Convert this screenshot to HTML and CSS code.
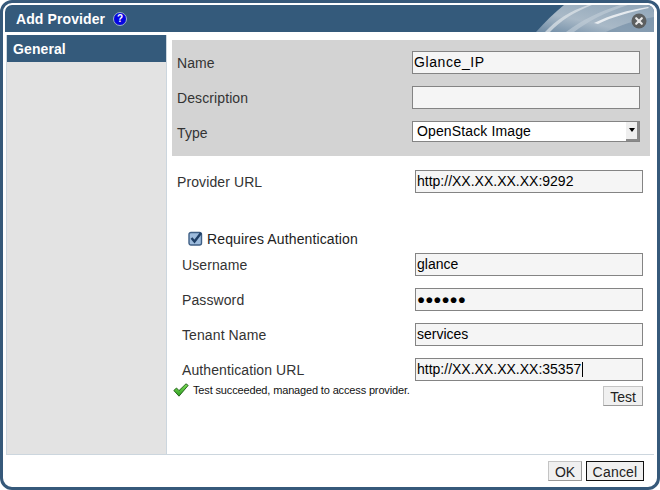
FILE: index.html
```html
<!DOCTYPE html>
<html lang="en">
<head>
    <meta charset="UTF-8">
    <title>Add Provider</title>
    <link rel="stylesheet" href="styles.css">
</head>
<body>
    <div class="dialog">
        <header class="dialog-head">
            <span class="dialog-title">Add Provider</span>
            <span class="help-icon">?</span>
            <svg class="head-art" width="118" height="27" viewBox="0 0 118 27">
                <defs>
                    <linearGradient id="sheen" x1="0" y1="1" x2="1" y2="0">
                        <stop offset="0" stop-color="#6d8aa4"/>
                        <stop offset="0.4" stop-color="#a9b9c7"/>
                        <stop offset="1" stop-color="#8fa5b8"/>
                    </linearGradient>
                </defs>
                <path d="M0 27 C9 17 18 8 28 0 H118 V27 Z" fill="url(#sheen)"/>
                <path d="M9 27 C20 15 34 6 52 0 H56 C38 7 24 16 14 27 Z" fill="#dfe5ea" opacity="0.7"/>
                <path d="M30 27 C46 15 62 7 84 0 H92 C70 7 52 16 38 27 Z" fill="#c3cfd9" opacity="0.6"/>
                <path d="M58 18 C74 10 92 5 112 2 L113 3 C94 7 76 12 62 19 Z" fill="#f2f5f7" opacity="0.85"/>
                <path d="M70 27 C84 20 100 15 118 12 V27 Z" fill="#6f8ba4" opacity="0.6"/>
            </svg>
            <svg class="close-icon" width="16" height="16" viewBox="0 0 16 16">
                <circle cx="8" cy="8" r="7.5" fill="#5c5f60"/>
                <path d="M5.2 5.2 L10.8 10.8 M10.8 5.2 L5.2 10.8" stroke="#e8e8e8" stroke-width="2.2" stroke-linecap="round"/>
            </svg>
        </header>

        <div class="dialog-body">
            <aside class="side-nav">
                <div class="side-tab">General</div>
            </aside>

            <main class="content">
                <section class="panel">
                    <div class="row">
                        <label>Name</label>
                        <div class="field">Glance_IP</div>
                    </div>
                    <div class="row">
                        <label>Description</label>
                        <div class="field"></div>
                    </div>
                    <div class="row">
                        <label>Type</label>
                        <div class="select">
                            <span>OpenStack Image</span>
                            <span class="select-btn"><i></i></span>
                        </div>
                    </div>
                </section>

                <div class="row url-row">
                    <label>Provider URL</label>
                    <div class="field">http://XX.XX.XX.XX:9292</div>
                </div>

                <div class="check-row">
                    <svg class="check-box" width="15" height="15" viewBox="0 0 15 15">
                        <rect x="1" y="1.5" width="12.5" height="12.5" rx="2" fill="#9dbbdc" stroke="#3f5f85" stroke-width="1.4"/>
                        <path d="M3.5 7 L6.5 10.5 L13 2" fill="none" stroke="#1f3f66" stroke-width="2.4"/>
                    </svg>
                    <span>Requires Authentication</span>
                </div>

                <div class="auth">
                    <div class="row">
                        <label>Username</label>
                        <div class="field">glance</div>
                    </div>
                    <div class="row">
                        <label>Password</label>
                        <div class="field dots">&#9679;&#9679;&#9679;&#9679;&#9679;&#9679;</div>
                    </div>
                    <div class="row">
                        <label>Tenant Name</label>
                        <div class="field">services</div>
                    </div>
                    <div class="row">
                        <label>Authentication URL</label>
                        <div class="field">http://XX.XX.XX.XX:35357<span class="caret"></span></div>
                    </div>
                </div>

                <div class="test-row">
                    <div class="test-msg">
                        <svg width="16" height="14" viewBox="0 0 16 14">
                            <defs>
                                <linearGradient id="tick" x1="0" y1="0" x2="0" y2="1">
                                    <stop offset="0" stop-color="#7fe05a"/>
                                    <stop offset="1" stop-color="#2f9e22"/>
                                </linearGradient>
                            </defs>
                            <path d="M0.8 7.5 L3.5 5 L6 7.6 L13 0.8 L15.2 2.4 L6 13.2 Z" fill="url(#tick)" stroke="#1d5a14" stroke-width="0.9"/>
                        </svg>
                        <span>Test succeeded, managed to access provider.</span>
                    </div>
                    <button class="btn btn-test">Test</button>
                </div>
            </main>
        </div>

        <footer class="dialog-foot">
            <button class="btn btn-ok">OK</button>
            <button class="btn btn-default">Cancel</button>
        </footer>
    </div>
</body>
</html>
```

FILE: styles.css
```css
* {
    margin: 0;
    padding: 0;
    box-sizing: border-box;
}
html, body {
    height: 100%;
}
body {
    font-family: "Liberation Sans", Arial, sans-serif;
    font-size: 14px;
    color: #333;
    background: #fff;
    overflow: hidden;
}
label {
    letter-spacing: 0.1px;
}
.dialog {
    height: 490px;
    display: flex;
    flex-direction: column;
    border: 3px solid #36597a;
    border-radius: 12px;
    padding: 2px 3px 0 2px;
    background: #fff;
}
.dialog-head {
    position: relative;
    height: 27px;
    flex: none;
    display: flex;
    align-items: center;
    gap: 8px;
    padding-left: 11px;
    background: #345a7b;
    border-radius: 7px 7px 0 0;
    overflow: hidden;
}
.dialog-title {
    color: #fff;
    font-weight: bold;
    letter-spacing: 0.1px;
}
.help-icon {
    width: 14px;
    height: 14px;
    border-radius: 50%;
    background: #0505e0;
    border: 1px solid #9db2c8;
    color: #fff;
    font-size: 10px;
    font-weight: bold;
    line-height: 12px;
    text-align: center;
}
.head-art {
    position: absolute;
    right: 0;
    top: 0;
}
.close-icon {
    position: absolute;
    right: 7px;
    top: 8px;
}
.dialog-body {
    flex: 1;
    display: flex;
    margin: 3px 0 0 1px;
    border: 1px solid #ccd6de;
    border-top: none;
    border-right: none;
    min-height: 0;
}
.side-nav {
    width: 160px;
    flex: none;
    background: #e3e3e3;
    border-right: 1px solid #ccd6de;
}
.side-tab {
    height: 27px;
    padding-left: 6px;
    line-height: 29px;
    background: #345a7b;
    color: #fff;
    font-weight: bold;
    letter-spacing: 0.1px;
}
.content {
    flex: 1;
    padding: 5px 0 0 5px;
}
.panel {
    width: 478px;
    height: 116px;
    padding-top: 11px;
    background: #d3d3d3;
}
.row {
    display: flex;
    align-items: center;
    justify-content: space-between;
    height: 23px;
    margin-bottom: 12px;
    padding-left: 5px;
}
.panel .row {
    padding-right: 10px;
}
.field {
    width: 228px;
    height: 23px;
    line-height: 21px;
    padding-left: 1px;
    border: 1px solid #848484;
    background: #f5f5f5;
    color: #000;
}
.panel .field {
    letter-spacing: 0.6px;
}
.dots {
    font-size: 13.5px;
}
.select {
    width: 228px;
    height: 21px;
    align-self: flex-start;
    display: flex;
    align-items: center;
    justify-content: space-between;
    padding: 0 0 1px 4px;
    border: 1px solid #848484;
    background: #fff;
    color: #000;
    letter-spacing: 0.13px;
}
.select-btn {
    width: 13px;
    height: 19px;
    display: flex;
    align-items: center;
    justify-content: center;
    background: #efefef;
    border-right: 2px solid #8a8a8a;
    border-bottom: 2px solid #8a8a8a;
}
.select-btn i {
    border: 3px solid transparent;
    border-top: 4px solid #000;
    border-bottom: none;
}
.url-row {
    margin-top: 14px;
    padding-right: 11px;
}
.check-row {
    display: flex;
    align-items: center;
    gap: 4px;
    margin: 37px 0 0 16px;
    height: 17px;
    color: #222;
    letter-spacing: 0.13px;
}
.auth {
    margin-top: 6px;
    padding-left: 5px;
    padding-right: 11px;
}
.test-row {
    display: flex;
    justify-content: space-between;
    align-items: flex-start;
    margin-top: -10px;
    padding-left: 1px;
    padding-right: 11px;
}
.test-msg {
    display: flex;
    align-items: center;
    gap: 4px;
    font-size: 11px;
    color: #111;
    letter-spacing: -0.15px;
}
.test-row .btn {
    margin-top: 3px;
}
.caret {
    display: inline-block;
    width: 1px;
    height: 15px;
    margin-left: 1px;
    vertical-align: -3px;
    background: #000;
}
.btn {
    height: 20px;
    padding: 2px 0 0;
    font-family: inherit;
    font-size: 14px;
    color: #222;
    background: #f0f0f0;
    border: 1px solid #c4c4c4;
    border-right-color: #9a9a9a;
    border-bottom-color: #9a9a9a;
}
.btn-ok {
    width: 34px;
}
.btn-test {
    width: 40px;
}
.btn-default {
    width: 58px;
    border: 1px solid #111;
    letter-spacing: 0.2px;
}
.dialog-foot {
    height: 32px;
    flex: none;
    display: flex;
    justify-content: flex-end;
    align-items: flex-start;
    gap: 4px;
    padding: 6px 10px 0 0;
}
```
